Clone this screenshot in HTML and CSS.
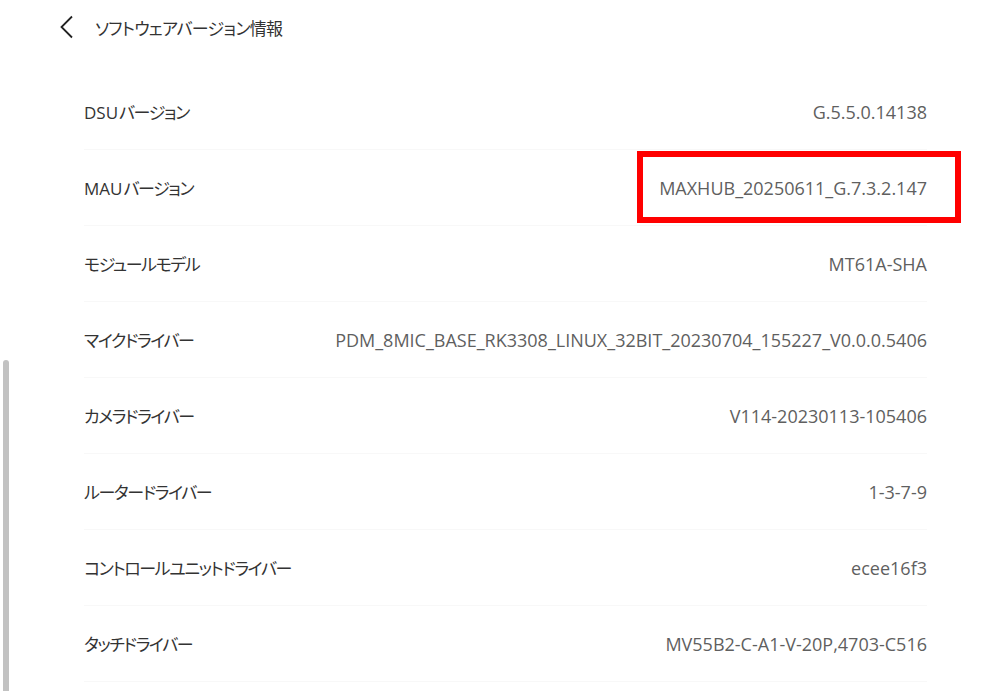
FILE: index.html
```html
<!DOCTYPE html>
<html lang="ja">
<head>
<meta charset="utf-8">
<link rel="stylesheet" href="styles.css">
</head>
<body>
<div class="page">
  <header class="header">
    <svg class="back" width="16" height="24" viewBox="0 0 16 24"><path d="M14 1.5 L3.5 12 L14 22.5" fill="none" stroke="#222" stroke-width="1.8"/></svg>
    <span class="title">ソフトウェアバージョン情報</span>
  </header>
  <div class="list">
    <div class="row"><span class="label"><span class="latin">DSU</span>バージョン</span><span class="value">G.5.5.0.14138</span></div>
    <div class="row"><span class="label"><span class="latin">MAU</span>バージョン</span><span class="value">MAXHUB_20250611_G.7.3.2.147</span><span class="mark"></span></div>
    <div class="row"><span class="label">モジュールモデル</span><span class="value">MT61A-SHA</span></div>
    <div class="row"><span class="label">マイクドライバー</span><span class="value">PDM_8MIC_BASE_RK3308_LINUX_32BIT_20230704_155227_V0.0.0.5406</span></div>
    <div class="row"><span class="label">カメラドライバー</span><span class="value">V114-20230113-105406</span></div>
    <div class="row"><span class="label">ルータードライバー</span><span class="value">1-3-7-9</span></div>
    <div class="row"><span class="label">コントロールユニットドライバー</span><span class="value">ecee16f3</span></div>
    <div class="row"><span class="label">タッチドライバー</span><span class="value">MV55B2-C-A1-V-20P,4703-C516</span></div>
  </div>
  <div class="scrollbar"></div>
</div>
</body>
</html>
```

FILE: styles.css
```css
html, body {
  margin: 0;
  padding: 0;
  background: #fff;
  overflow: hidden;
}
.page {
  position: relative;
  width: 997px;
  height: 691px;
  overflow: hidden;
  font-family: "Open Sans", "Noto Sans CJK JP", sans-serif;
  font-feature-settings: "palt";
}
.header {
  height: 54px;
  display: flex;
  align-items: center;
  padding-left: 58px;
  box-sizing: border-box;
}
.back {
  display: block;
  margin-right: 21px;
}
.title {
  font-size: 17px;
  color: #333;
  letter-spacing: -0.7px;
}
.list {
  margin-top: 20px;
  margin-left: 84px;
  width: 843px;
}
.row {
  position: relative;
  height: 75px;
  border-bottom: 1px solid #f8f8f8;
  display: flex;
  align-items: center;
  justify-content: space-between;
}
.label {
  font-size: 17px;
  color: #333;
  letter-spacing: -1.4px;
}
.latin {
  letter-spacing: 0;
  margin-right: 1px;
}
.value {
  font-size: 18px;
  color: #5f5f5f;
}
.mark {
  position: absolute;
  left: 553px;
  top: 1px;
  width: 312px;
  height: 60px;
  border: 6px solid #ff0000;
}
.scrollbar {
  position: absolute;
  left: 3px;
  top: 360px;
  width: 6px;
  height: 340px;
  border-radius: 3px;
  background: #c2c2c2;
}
```
